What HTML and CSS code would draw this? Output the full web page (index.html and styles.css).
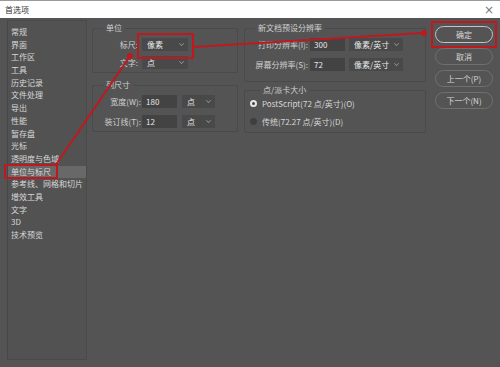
FILE: index.html
```html
<!DOCTYPE html>
<html lang="zh-CN">
<head>
  <meta charset="UTF-8">
  <title>首选项</title>
  <link rel="stylesheet" href="styles.css">
</head>
<body>
  <header class="titlebar">
    <span>首选项</span>
    <span class="close">&times;</span>
  </header>

  <div class="dialog">
    <ul class="sidebar">
      <li>常规</li>
      <li>界面</li>
      <li>工作区</li>
      <li>工具</li>
      <li>历史记录</li>
      <li>文件处理</li>
      <li>导出</li>
      <li>性能</li>
      <li>暂存盘</li>
      <li>光标</li>
      <li>透明度与色域</li>
      <li class="active">单位与标尺</li>
      <li>参考线、网格和切片</li>
      <li>增效工具</li>
      <li>文字</li>
      <li>3D</li>
      <li>技术预览</li>
    </ul>

    <main class="content">
      <div class="col col-left">
        <fieldset class="group g-units">
          <legend>单位</legend>
          <div class="rows">
            <div class="row"><label>标尺:</label><span class="select s-unit">像素<i class="chev"></i></span></div>
            <div class="row"><label>文字:</label><span class="select s-unit">点<i class="chev"></i></span></div>
          </div>
        </fieldset>
        <fieldset class="group g-cols">
          <legend>列尺寸</legend>
          <div class="rows">
            <div class="row"><label>宽度(W):</label><span class="input">180</span><span class="select s-small">点<i class="chev"></i></span></div>
            <div class="row"><label>装订线(T):</label><span class="input">12</span><span class="select s-small">点<i class="chev"></i></span></div>
          </div>
        </fieldset>
      </div>

      <div class="col col-right">
        <fieldset class="group g-res">
          <legend>新文档预设分辨率</legend>
          <div class="rows">
            <div class="row"><label>打印分辨率(I):</label><span class="input">300</span><span class="select s-wide">像素/英寸<i class="chev"></i></span></div>
            <div class="row"><label>屏幕分辨率(S):</label><span class="input">72</span><span class="select s-wide">像素/英寸<i class="chev"></i></span></div>
          </div>
        </fieldset>
        <fieldset class="group g-pica">
          <legend>点/派卡大小</legend>
          <div class="rows">
            <div class="radio checked"><i></i>PostScript(72 点/英寸)(O)</div>
            <div class="radio"><i></i>传统(72.27 点/英寸)(D)</div>
          </div>
        </fieldset>
      </div>
    </main>

    <div class="buttons">
      <button class="btn default">确定</button>
      <button class="btn">取消</button>
      <button class="btn">上一个(P)</button>
      <button class="btn">下一个(N)</button>
    </div>
  </div>

  <!-- red annotation marks drawn over the dialog -->
  <svg class="marks" width="500" height="367" viewBox="0 0 500 367">
    <g fill="none" stroke="#c0181f" stroke-width="2">
      <rect x="5" y="165" width="52" height="13"/>
      <rect x="138" y="34" width="55" height="24"/>
      <rect x="432" y="22" width="64" height="25"/>
      <line x1="55" y1="166" x2="130" y2="56"/>
      <line x1="193" y1="47" x2="423" y2="33"/>
    </g>
    <g fill="#c0181f">
      <circle cx="130" cy="56" r="3"/>
      <circle cx="424" cy="33" r="3"/>
    </g>
  </svg>
</body>
</html>
```

FILE: styles.css
```css
body { margin:0; width:500px; height:367px; overflow:hidden; position:relative; background:#545454; color:#d4d4d4; font-family:"Noto Sans CJK SC", "Noto Sans", sans-serif; font-size:8px; }
.titlebar { height:18px; box-sizing:border-box; border-top:1px solid #9a9a9a; background:#fff; color:#333; display:flex; align-items:center; justify-content:space-between; padding:0 6px 0 5px; font-size:8px; }
.close { color:#777; font-size:12px; font-family:"DejaVu Sans", sans-serif; }

.dialog { display:flex; align-items:flex-start; padding:2px 0 0 7px; }
.sidebar { list-style:none; margin:0; padding:5px 0 0; width:80px; height:340px; box-sizing:border-box; border:1px solid #4a4a4a; border-left-color:#474747; background:#525252; }
.sidebar li { height:12.7px; line-height:12.7px; padding-left:3px; white-space:nowrap; color:#d8d8d8; }
.sidebar li.active { background:#686868; }

.content { display:flex; gap:6px; margin:3px 0 0 5px; }
.col { display:flex; flex-direction:column; }
.col-left { width:146px; gap:7px; }
.col-right { width:182px; gap:3px; }

.group { margin:0; padding:5px 0 3px; border:1px solid #4a4a4a; border-radius:2px; min-width:0; }
.group legend { margin-left:10px; padding:0 3px; line-height:10px; height:10px; color:#d0d0d0; }
.rows { display:flex; flex-direction:column; gap:5px; }
.row { display:flex; align-items:center; height:13px; }
.row label { text-align:right; white-space:nowrap; color:#cfcfcf; }

.g-units label { width:45px; margin-right:4px; }
.g-cols .rows { gap:7px; }
.g-cols label { width:48px; margin-right:1px; }
.g-res { padding-bottom:10px; }
.g-res .rows { gap:7px; }
.g-res label { width:63px; margin-right:2px; }
.g-pica { padding:2px 0 5px 5px; }
.g-pica .rows { gap:6px; }

.input, .select { height:13px; box-sizing:border-box; display:flex; align-items:center; color:#e8e8e8; }
.input { width:35px; background:#434343; padding-left:4px; }
.select { background:#494949; padding:0 4px 0 5px; justify-content:space-between; margin-left:4px; }
.g-units .select { margin-left:0; }
.g-cols .select { margin-left:5px; }
.s-unit { width:46px; }
.s-small { width:33px; }
.s-wide { width:54px; }
.chev { width:4px; height:4px; border-right:1px solid #9a9a9a; border-bottom:1px solid #9a9a9a; transform:rotate(45deg) scale(0.7); margin-top:-2px; }

.radio { display:flex; align-items:center; height:12px; white-space:nowrap; color:#d8d8d8; }
.radio i { width:7px; height:7px; box-sizing:border-box; border-radius:50%; background:#3f3f3f; margin-right:5px; }
.radio.checked i { background:#444; border:2px solid #e6e6e6; }

.buttons { display:flex; flex-direction:column; gap:5px; margin:6px 0 0 9px; width:58px; }
.btn { height:17px; padding:0; border:1px solid #707070; border-radius:9px; background:#545454; color:#d8d8d8; font:inherit; font-size:8px; }
.btn.default { border-color:#c4c4c4; }

.marks { position:absolute; left:0; top:0; pointer-events:none; }
```
